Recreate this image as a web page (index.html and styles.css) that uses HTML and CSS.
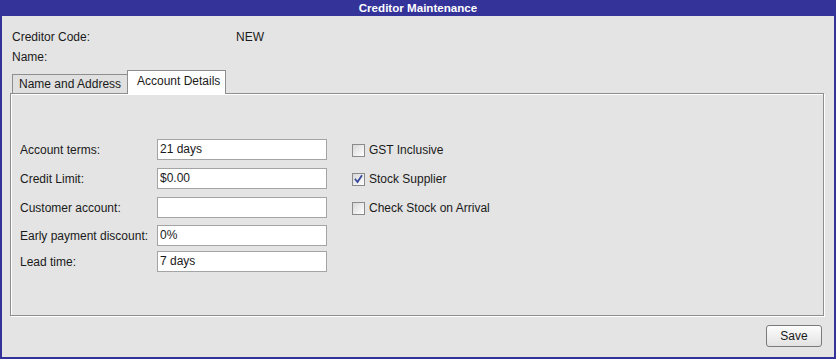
FILE: index.html
```html
<!DOCTYPE html>
<html>
<head>
<meta charset="utf-8">
<link rel="stylesheet" href="styles.css">
</head>
<body>
<div class="window">
  <div class="titlebar">Creditor Maintenance</div>
  <div class="content">
    <div class="info">
      <div class="info-row"><span class="info-label">Creditor Code:</span><span>NEW</span></div>
      <div class="info-row"><span class="info-label">Name:</span><span></span></div>
    </div>
    <div class="tabs">
      <div class="tab">Name and Address</div>
      <div class="tab active">Account Details</div>
    </div>
    <div class="panel">
      <div class="form">
        <div class="row r1">
          <span class="label">Account terms:</span>
          <span class="field">21 days</span>
          <span class="check"><span class="box"></span>GST Inclusive</span>
        </div>
        <div class="row r2">
          <span class="label">Credit Limit:</span>
          <span class="field">$0.00</span>
          <span class="check"><span class="box"><svg width="11" height="11" viewBox="0 0 11 11"><path d="M2.5 5.5 L4.5 8 L8.5 2" fill="none" stroke="#36469a" stroke-width="1.8" stroke-linecap="square"/></svg></span>Stock Supplier</span>
        </div>
        <div class="row r3">
          <span class="label">Customer account:</span>
          <span class="field"></span>
          <span class="check"><span class="box"></span>Check Stock on Arrival</span>
        </div>
        <div class="row r4">
          <span class="label">Early payment discount:</span>
          <span class="field">0%</span>
        </div>
        <div class="row r5">
          <span class="label">Lead time:</span>
          <span class="field">7 days</span>
        </div>
      </div>
    </div>
    <div class="footer">
      <button class="btn">Save</button>
    </div>
  </div>
</div>
</body>
</html>
```
FILE: styles.css
```css
html, body {
  margin: 0;
  padding: 0;
  background: #e4e4e4;
}
body {
  font-family: "Liberation Sans", Arial, sans-serif;
  font-size: 12px;
  color: #1a1a1a;
}
.window {
  width: 836px;
  height: 359px;
  box-sizing: border-box;
  border: 2px solid #333399;
  border-top: 0;
  background: #e4e4e4;
  display: flex;
  flex-direction: column;
}
.titlebar {
  height: 16px;
  line-height: 15px;
  background: #333399;
  color: #fff;
  font-weight: bold;
  font-size: 11.6px;
  text-align: center;
  margin: 0 -2px;
}
.content {
  padding: 11px 0 0 8px;
  display: flex;
  flex-direction: column;
}
.info {
  padding-left: 2px;
}
.info-row {
  display: flex;
  height: 20px;
  line-height: 20px;
}
.info-label {
  width: 224px;
}
.tabs {
  display: flex;
  align-items: flex-end;
  margin-top: 4px;
  padding-left: 2px;
  height: 22px;
}
.tab {
  box-sizing: border-box;
  width: 116px;
  height: 19px;
  line-height: 19px;
  padding-left: 6px;
  border: 1px solid #8e8e8e;
  border-bottom: 0;
  background: #e0e0e0;
  white-space: nowrap;
}
.tab.active {
  width: 99px;
  height: 24px;
  line-height: 21px;
  background: #fff;
  padding-left: 9px;
  margin-left: -1px;
  margin-bottom: -1px;
  position: relative;
  z-index: 1;
}
.panel {
  width: 814px;
  height: 223px;
  box-sizing: border-box;
  border: 1px solid #8e8e8e;
  box-shadow: 1px 1px 0 #fff, inset 1px 1px 0 #fff;
}
.form {
  padding: 45px 0 0 9px;
  display: flex;
  flex-direction: column;
}
.row {
  display: flex;
  align-items: center;
  height: 21px;
}
.r2, .r3 { margin-top: 8px; }
.r4 { margin-top: 7px; }
.r5 { margin-top: 5px; }
.label {
  width: 137px;
}
.field {
  width: 170px;
  height: 21px;
  box-sizing: border-box;
  border: 1px solid #a4a4a4;
  background: #fff;
  padding-left: 2px;
  line-height: 19px;
}
.check {
  display: flex;
  align-items: center;
  margin-left: 25px;
  padding-top: 1px;
}
.box {
  width: 11px;
  height: 11px;
  border: 1px solid #8a8a8a;
  background: linear-gradient(135deg, #d8d8d8, #ffffff);
  margin-right: 4px;
  display: flex;
  align-items: center;
  justify-content: center;
}
.footer {
  display: flex;
  justify-content: flex-end;
  padding-right: 12px;
  margin-top: 9px;
}
.btn {
  width: 56px;
  height: 22px;
  box-sizing: border-box;
  border: 1px solid #7a7a7a;
  border-radius: 3px;
  background: linear-gradient(#fdfdfd, #e2e2e2);
  font-family: "Liberation Sans", Arial, sans-serif;
  font-size: 12px;
  color: #1a1a1a;
  padding: 0;
}
```
